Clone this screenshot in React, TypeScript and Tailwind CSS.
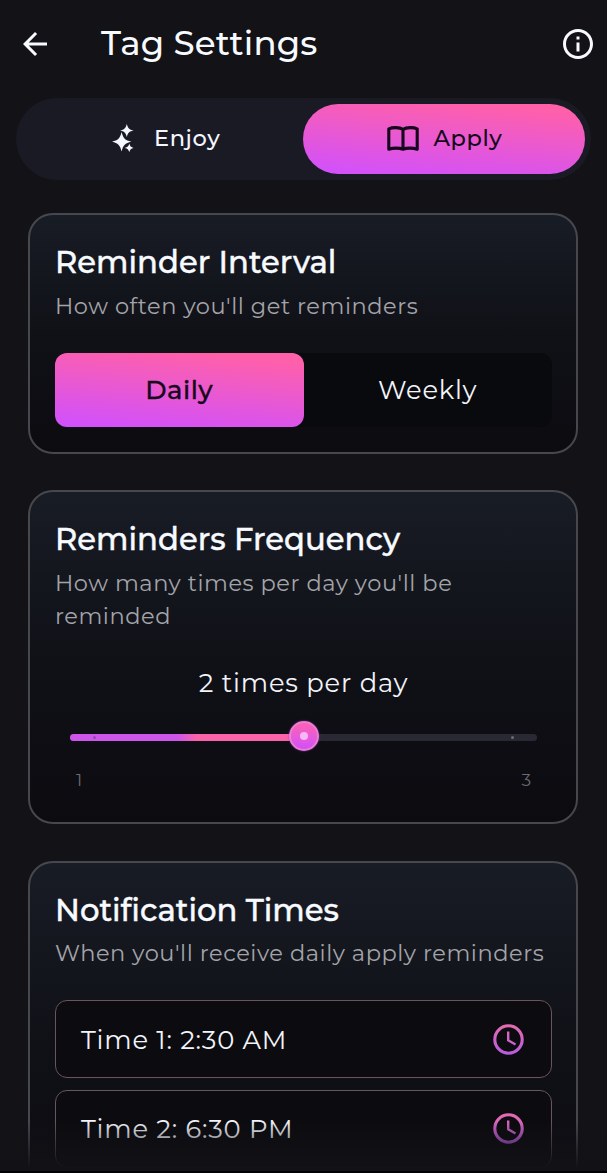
import type { ReactNode } from "react";
import { MdArrowBack, MdInfoOutline } from "react-icons/md";

function Sparkles() {
  return (
    <svg width="24" height="30" viewBox="0 0 24 30" fill="#f4f7ff">
      <path d="M9.600 8 C11.300 14.600 13 16.100 19.300 17.700 C13 19.300 11.300 20.800 9.600 27.400 C7.900 20.800 6.200 19.300 0 17.700 C6.200 16.100 7.900 14.600 9.600 8Z" />
      <path d="M14.800 0 C16 4.400 17.200 5.600 21.600 6.500 C17.200 7.500 16 8.700 14.800 13 C13.600 8.700 12.400 7.500 8.100 6.500 C12.400 5.600 13.600 4.400 14.800 0Z" />
      <path d="M17.300 19.600 C18.200 22.500 18.800 23.100 21.600 23.900 C18.800 24.700 18.200 25.300 17.300 28.200 C16.400 25.300 15.800 24.700 12.900 23.900 C15.800 23.100 16.400 22.500 17.300 19.600Z" />
    </svg>
  );
}

function OpenBook() {
  return (
    <svg width="32" height="26" viewBox="0 0 32 26" fill="none" stroke="#16071d" strokeWidth="3.100" strokeLinejoin="round" strokeLinecap="round">
      <path d="M16 3.300 C12.500 1.200 5.500 1.200 1.800 2.800 V23.300 C6 21.700 12.500 21.700 16 23.300 C19.500 21.700 26 21.700 30.200 23.300 V2.800 C26.500 1.200 19.500 1.200 16 3.300 V23.300" />
    </svg>
  );
}

function Clock() {
  return (
    <svg width="31" height="31" viewBox="0 0 31 31" fill="none">
      <defs>
        <linearGradient id="clock" x1="0" y1="0" x2="0" y2="31" gradientUnits="userSpaceOnUse">
          <stop stopColor="#e76bae" />
          <stop offset="1" stopColor="#b65be0" />
        </linearGradient>
      </defs>
      <circle cx="15.500" cy="15.500" r="13.700" stroke="url(#clock)" strokeWidth="3.100" />
      <path d="M15.200 7.500 V16.300 L22.500 20.500" stroke="url(#clock)" strokeWidth="2.400" />
    </svg>
  );
}

function Card({ title, children, className }: { title: string; children: ReactNode; className: string }) {
  return (
    <section className={`ml-[28px] w-[550px] shrink-0 rounded-[25px] border-2 border-[#47484e] bg-linear-to-b from-[#181c25] via-[#101117] to-[#0b0b10] pt-[27px] pr-[24px] pl-[25px] ${className}`}>
      <h2 className="h-10 text-[30.700px] leading-[41px] font-medium whitespace-nowrap text-[#f7faff] [-webkit-text-stroke:0.4px_#f7faff]">{title}</h2>
      {children}
    </section>
  );
}

function Hint({ children }: { children: ReactNode }) {
  return <p className="mt-[7.500px] text-[22.500px] leading-[33px] font-normal tracking-[0.550px] whitespace-nowrap text-[#a3a4a9]">{children}</p>;
}

function TimeRow({ label }: { label: string }) {
  return (
    <div className="flex h-[78px] items-center justify-between rounded-[12px] border-[1.500px] border-[#6b5559] bg-[#0b0b10] pr-[27px] pl-[25px]">
      <span className="pt-px text-[25.800px] leading-8 tracking-[0.770px] whitespace-nowrap text-[#f2f4fa]">{label}</span>
      <Clock />
    </div>
  );
}

export default function App() {
  return (
    <main className="relative flex h-[1173px] w-[607px] flex-col overflow-hidden bg-[#121217] font-['Montserrat','Inter',sans-serif]">
      <header className="flex h-[98px] shrink-0 items-start pt-[25.500px] pr-[11px] pl-[16.500px] text-[#f7faff]">
        <MdArrowBack size={36} />
        <h1 className="ml-[48.500px] flex-1 text-[34px] leading-[34px] font-medium tracking-[0.150px] whitespace-nowrap">Tag Settings</h1>
        <MdInfoOutline size={36} />
      </header>

      <nav className="ml-4 flex h-[82px] w-[575px] shrink-0 items-center rounded-full bg-[#1a1a25] pr-[6.500px]">
        <button className="flex flex-1 items-center pl-[96px] text-[22.500px] font-medium text-[#f4f7ff]">
          <Sparkles />
          <span className="ml-[18px] tracking-[0.600px]">Enjoy</span>
        </button>
        <button className="flex h-[70px] w-[281.500px] items-center rounded-full bg-[linear-gradient(185deg,#ff60aa_10%,#cf50ff_100%)] pl-[84px] text-[22.500px] font-medium text-[#16071d]">
          <OpenBook />
          <span className="ml-[14.500px] tracking-[0.600px]">Apply</span>
        </button>
      </nav>

      <Card title="Reminder Interval" className="mt-[33px] h-[240.500px]">
        <Hint>How often you'll get reminders</Hint>
        <div className="mt-[30px] flex h-[74.500px] rounded-[12px] bg-[#090a0e] text-[25.800px]">
          <button className="w-1/2 rounded-[12px] bg-[linear-gradient(185deg,#ff60aa_10%,#cf50ff_100%)] pt-px font-medium tracking-[0.500px] text-[#16071d] [-webkit-text-stroke:0.3px_#16071d]">Daily</button>
          <button className="w-1/2 pt-px tracking-[0.770px] text-[#f2f4fa]">Weekly</button>
        </div>
      </Card>

      <Card title="Reminders Frequency" className="mt-[36.500px] h-[334px]">
        <Hint>
          How many times per day you'll be
          <br />
          reminded
        </Hint>
        <p className="mt-[31.500px] text-center text-[25.800px] leading-[38px] tracking-[0.800px] text-[#f2f4fa]">2 times per day</p>
        <div className="relative mr-[15px] ml-[15px] mt-[32px] h-[7px] rounded-full bg-[#292933]">
          <div className="h-full w-1/2 rounded-full bg-[linear-gradient(90deg,#ce55ea_46%,#fa62aa_54%)]" />
          <i className="absolute top-[2px] left-[23px] size-[3px] rounded-full bg-[#914cac]" />
          <i className="absolute top-[2px] right-[23px] size-[3px] rounded-full bg-[#6c6c75]" />
          <div className="absolute top-[-13.500px] left-[218.500px] flex size-[30px] items-center justify-center rounded-full border-2 border-[#e781d4] bg-linear-to-b from-[#ff60b0] to-[#d44dfa] shadow-[0_0_2px_#a02fb0]">
            <i className="size-[8px] rounded-full bg-[#f8b8f5]" />
          </div>
        </div>
        <div className="mt-[23px] flex justify-between px-[21px] text-[17px] leading-8 text-[#6a6b71]">
          <span>1</span>
          <span>3</span>
        </div>
      </Card>

      <Card title="Notification Times" className="mt-[36.500px] h-[360px]">
        <Hint>When you'll receive daily apply reminders</Hint>
        <div className="mt-[30px] flex flex-col gap-[11.500px]">
          <TimeRow label="Time 1: 2:30 AM" />
          <TimeRow label="Time 2: 6:30 PM" />
        </div>
      </Card>

      <div className="absolute inset-x-0 bottom-[2px] h-[50px] bg-linear-to-b from-transparent to-[#111116] to-95%" />
      <div className="absolute inset-x-0 bottom-0 h-[2px] bg-black" />
    </main>
  );
}
